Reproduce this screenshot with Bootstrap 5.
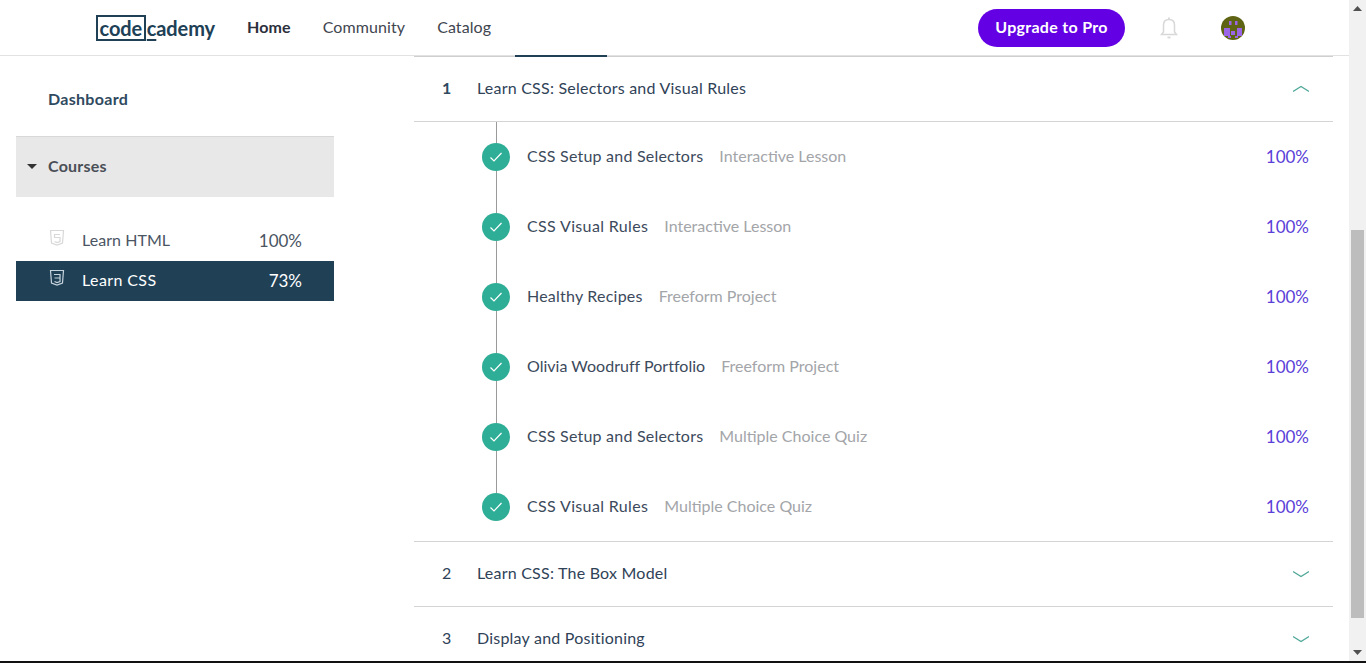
<!DOCTYPE html>
<html lang="en">
<head>
<meta charset="utf-8">
<title>Codecademy</title>
<link href="https://cdn.jsdelivr.net/npm/bootstrap@5.3.0/dist/css/bootstrap.min.css" rel="stylesheet">
<style>
html,body{height:663px;overflow:hidden}
body{font-family:"Lato","Noto Sans",sans-serif;font-size:16px;letter-spacing:.22px;color:#2f4257;background:#fff}
.shell{height:661px}
.pagearea{width:1349px;min-width:1349px;height:661px;overflow:hidden}
.topbar{height:56px;flex:none;padding-left:96px;padding-right:104px;border-bottom:1px solid #e2e2e2}
.logo-box{border:2px solid #204056;width:50px;height:26px;color:#204056;margin-right:1px}
.logo{font-size:20px;letter-spacing:-.1px;font-weight:700;color:#204056;line-height:26px;width:119px;flex:none}
.logo-u{text-decoration:underline;text-underline-offset:3px}
.topnav{margin-left:32px;gap:32px;padding-bottom:2px}
.topnav a{color:#3f4650;text-decoration:none;letter-spacing:.1px}
.topnav a.on{font-weight:700;color:#2c2f3c}
.up-btn{background:#6400e4;color:#fff;font-weight:700;border-radius:19px;height:38px;width:147px;border:0;font-size:16px;letter-spacing:.3px;padding:0 0 2px}
.bell-wrap{margin-left:34px;width:20px}
.avatar-wrap{margin-left:42px;width:24px}
.sidebar{width:414px;min-width:414px;padding:0 80px 0 16px}
.dash{height:80px;padding-left:32px;padding-top:6px;font-weight:700;color:#2f4a60;letter-spacing:.3px}
.courses{height:61px;background:#e8e8e8;border-top:1px solid #d8d8d8;font-weight:700;color:#4a4f57;padding-left:11px;padding-bottom:2px;margin-bottom:24px}
.caret-d{width:0;height:0;border-left:5px solid transparent;border-right:5px solid transparent;border-top:5px solid #333;margin-right:11px}
.cr{height:40px;padding-left:32px;padding-right:32px;color:#4a5563}
.cr .nm{margin-left:16px;letter-spacing:.05px;padding-bottom:2px}
.cr.sel .nm{letter-spacing:.4px}
.cr .pc{font-size:17px;letter-spacing:0}
.cr svg{margin-top:-6px}
.cr.sel{background:#204056;color:#fff}
.maincol{width:919px;min-width:919px}
.tabline{height:1px;background:#cfcfcf;position:relative}
.tabline b{position:absolute;left:101px;top:-1px;width:92px;height:2px;background:#204056}
.modrow{height:65px;padding:0 24px 0 28px;border-bottom:1px solid #d4d4d4}
.modrow .n{width:35px;padding-bottom:2px}
.modrow .nt{padding-bottom:2px}
.modrow .n.b{font-weight:700;color:#2f4a60}
.lessons{height:420px;border-bottom:1px solid #d4d4d4;position:relative}
.lessons-in{padding-left:68px;padding-right:24px}
.ln{height:70px;position:relative}
.ln .t{margin-left:17px;color:#3c4a5c;padding-bottom:2px}
.ln .t.tight{letter-spacing:.02px}
.ln .t.wide{letter-spacing:.35px}
.ln .k{margin-left:16px;color:#a3a5a9;letter-spacing:0;padding-bottom:2px}
.ln .p{color:#5a40d8;margin-left:auto;font-size:17px;letter-spacing:0}
.dot{width:28px;height:28px;border-radius:50%;background:#2eae97;position:relative;z-index:1}
.rail{position:absolute;left:82px;top:0;bottom:34px;width:1px;background:#9a9a9a}
.fakebar{width:17px;background:#f1f1f1}
.sb-btn{height:17px;flex:none}
.sb-track{flex:1 1 auto;padding:0 2px}
.sb-thumb{height:388px;background:#bdbdbd}
.sb-gap{height:213px}
.botline{height:2px;background:#111}
</style>
</head>
<body>
<div class="shell d-flex">
  <div class="pagearea d-flex flex-column">
    <header class="topbar d-flex align-items-center">
      <div class="logo d-flex align-items-center"><span class="logo-box d-flex align-items-center justify-content-center">code</span><span><span class="logo-u">c</span>ademy</span></div>
      <nav class="topnav d-flex"><a class="on" href="#">Home</a><a href="#">Community</a><a href="#">Catalog</a></nav>
      <div class="ms-auto d-flex align-items-center">
        <button class="btn up-btn" type="button">Upgrade to Pro</button>
        <div class="bell-wrap d-flex">
          <svg width="20" height="24" viewBox="0 0 20 24" fill="none" stroke="#d8d8d8" stroke-width="1.5"><path d="M4.500 16V9c0-3.500 2-5.500 5.500-5.500S15.500 5.500 15.500 9v7l2 2.500h-15z"/><circle cx="10" cy="2.200" r="1" fill="#d8d8d8" stroke="none"/><path d="M8.500 21.500h3" stroke-width="1.800"/></svg>
        </div>
        <div class="avatar-wrap d-flex">
          <svg width="24" height="24" viewBox="0 0 24 24"><circle cx="12" cy="12" r="12" fill="#5f6414"/><rect x="8" y="5" width="2.500" height="4" fill="#9a66e6"/><rect x="14" y="5" width="2.500" height="4" fill="#9a66e6"/><rect x="3" y="12" width="6" height="8" fill="#9a66e6"/><rect x="16" y="12" width="5" height="8" fill="#9a66e6"/><rect x="10" y="15" width="4" height="4" fill="#9a66e6"/><rect x="7" y="20" width="3" height="2" fill="#9a66e6"/><rect x="14" y="20" width="3" height="2" fill="#9a66e6"/></svg>
        </div>
      </div>
    </header>
    <div class="d-flex flex-grow-1">
      <aside class="sidebar">
        <div class="dash d-flex align-items-center">Dashboard</div>
        <div class="courses d-flex align-items-center"><span class="caret-d"></span>Courses</div>
        <div class="cr d-flex align-items-center">
          <svg width="18" height="18" viewBox="0 0 18 18" fill="none" stroke="#d8d8d8" stroke-width="1.200"><path d="M2.500 1.500h13l-1 12.500-5.500 2-5.500-2z"/><path d="M12 5.500H6.500v3H12v4l-3 1-2.500-1"/></svg>
          <span class="nm">Learn HTML</span><span class="ms-auto pc">100%</span>
        </div>
        <div class="cr sel d-flex align-items-center">
          <svg width="18" height="18" viewBox="0 0 18 18" fill="none" stroke="#c6d3dc" stroke-width="1.200"><path d="M2.500 1.500h13l-1 12.500-5.500 2-5.500-2z"/><path d="M6 5.500h6v7l-3 1-2.500-1M6.500 9H12"/></svg>
          <span class="nm">Learn CSS</span><span class="ms-auto pc">73%</span>
        </div>
      </aside>
      <main class="maincol">
        <div class="tabline"><b></b></div>
        <div class="modrow d-flex align-items-center"><span class="n b">1</span><span class="nt">Learn CSS: Selectors and Visual Rules</span>
          <svg class="ms-auto" width="16" height="8" viewBox="0 0 16 8" fill="none" stroke="#4fa899" stroke-width="1.300"><path d="M0 6.500 8 1.500l8 5"/></svg></div>
        <div class="lessons">
          <span class="rail"></span>
          <div class="lessons-in">
            <div class="ln d-flex align-items-center"><span class="dot d-flex align-items-center justify-content-center"><svg width="14" height="12" viewBox="0 0 14 12" fill="none" stroke="#fff" stroke-width="1.200"><path d="M1.500 6.500 5 10l7.500-8"/></svg></span><span class="t">CSS Setup and Selectors</span><span class="k">Interactive Lesson</span><span class="p">100%</span></div>
            <div class="ln d-flex align-items-center"><span class="dot d-flex align-items-center justify-content-center"><svg width="14" height="12" viewBox="0 0 14 12" fill="none" stroke="#fff" stroke-width="1.200"><path d="M1.500 6.500 5 10l7.500-8"/></svg></span><span class="t wide">CSS Visual Rules</span><span class="k">Interactive Lesson</span><span class="p">100%</span></div>
            <div class="ln d-flex align-items-center"><span class="dot d-flex align-items-center justify-content-center"><svg width="14" height="12" viewBox="0 0 14 12" fill="none" stroke="#fff" stroke-width="1.200"><path d="M1.500 6.500 5 10l7.500-8"/></svg></span><span class="t">Healthy Recipes</span><span class="k">Freeform Project</span><span class="p">100%</span></div>
            <div class="ln d-flex align-items-center"><span class="dot d-flex align-items-center justify-content-center"><svg width="14" height="12" viewBox="0 0 14 12" fill="none" stroke="#fff" stroke-width="1.200"><path d="M1.500 6.500 5 10l7.500-8"/></svg></span><span class="t tight">Olivia Woodruff Portfolio</span><span class="k">Freeform Project</span><span class="p">100%</span></div>
            <div class="ln d-flex align-items-center"><span class="dot d-flex align-items-center justify-content-center"><svg width="14" height="12" viewBox="0 0 14 12" fill="none" stroke="#fff" stroke-width="1.200"><path d="M1.500 6.500 5 10l7.500-8"/></svg></span><span class="t">CSS Setup and Selectors</span><span class="k">Multiple Choice Quiz</span><span class="p">100%</span></div>
            <div class="ln d-flex align-items-center"><span class="dot d-flex align-items-center justify-content-center"><svg width="14" height="12" viewBox="0 0 14 12" fill="none" stroke="#fff" stroke-width="1.200"><path d="M1.500 6.500 5 10l7.500-8"/></svg></span><span class="t wide">CSS Visual Rules</span><span class="k">Multiple Choice Quiz</span><span class="p">100%</span></div>
          </div>
        </div>
        <div class="modrow d-flex align-items-center"><span class="n">2</span><span class="nt">Learn CSS: The Box Model</span>
          <svg class="ms-auto" width="16" height="8" viewBox="0 0 16 8" fill="none" stroke="#4fa899" stroke-width="1.300"><path d="M0 1.500 8 6.500l8-5"/></svg></div>
        <div class="modrow d-flex align-items-center"><span class="n">3</span><span class="nt">Display and Positioning</span>
          <svg class="ms-auto" width="16" height="8" viewBox="0 0 16 8" fill="none" stroke="#4fa899" stroke-width="1.300"><path d="M0 1.500 8 6.500l8-5"/></svg></div>
      </main>
    </div>
  </div>
  <div class="fakebar d-flex flex-column">
    <div class="sb-btn d-flex align-items-center justify-content-center"><svg width="9" height="5" viewBox="0 0 9 5"><path d="M4.500 0 9 5H0z" fill="#505050"/></svg></div>
    <div class="sb-track d-flex flex-column"><div class="sb-gap"></div><div class="sb-thumb"></div></div>
    <div class="sb-btn d-flex align-items-center justify-content-center"><svg width="9" height="5" viewBox="0 0 9 5"><path d="M0 0h9L4.500 5z" fill="#505050"/></svg></div>
  </div>
</div>
<div class="botline"></div>
<script src="https://cdn.jsdelivr.net/npm/bootstrap@5.3.0/dist/js/bootstrap.bundle.min.js"></script>
</body>
</html>
